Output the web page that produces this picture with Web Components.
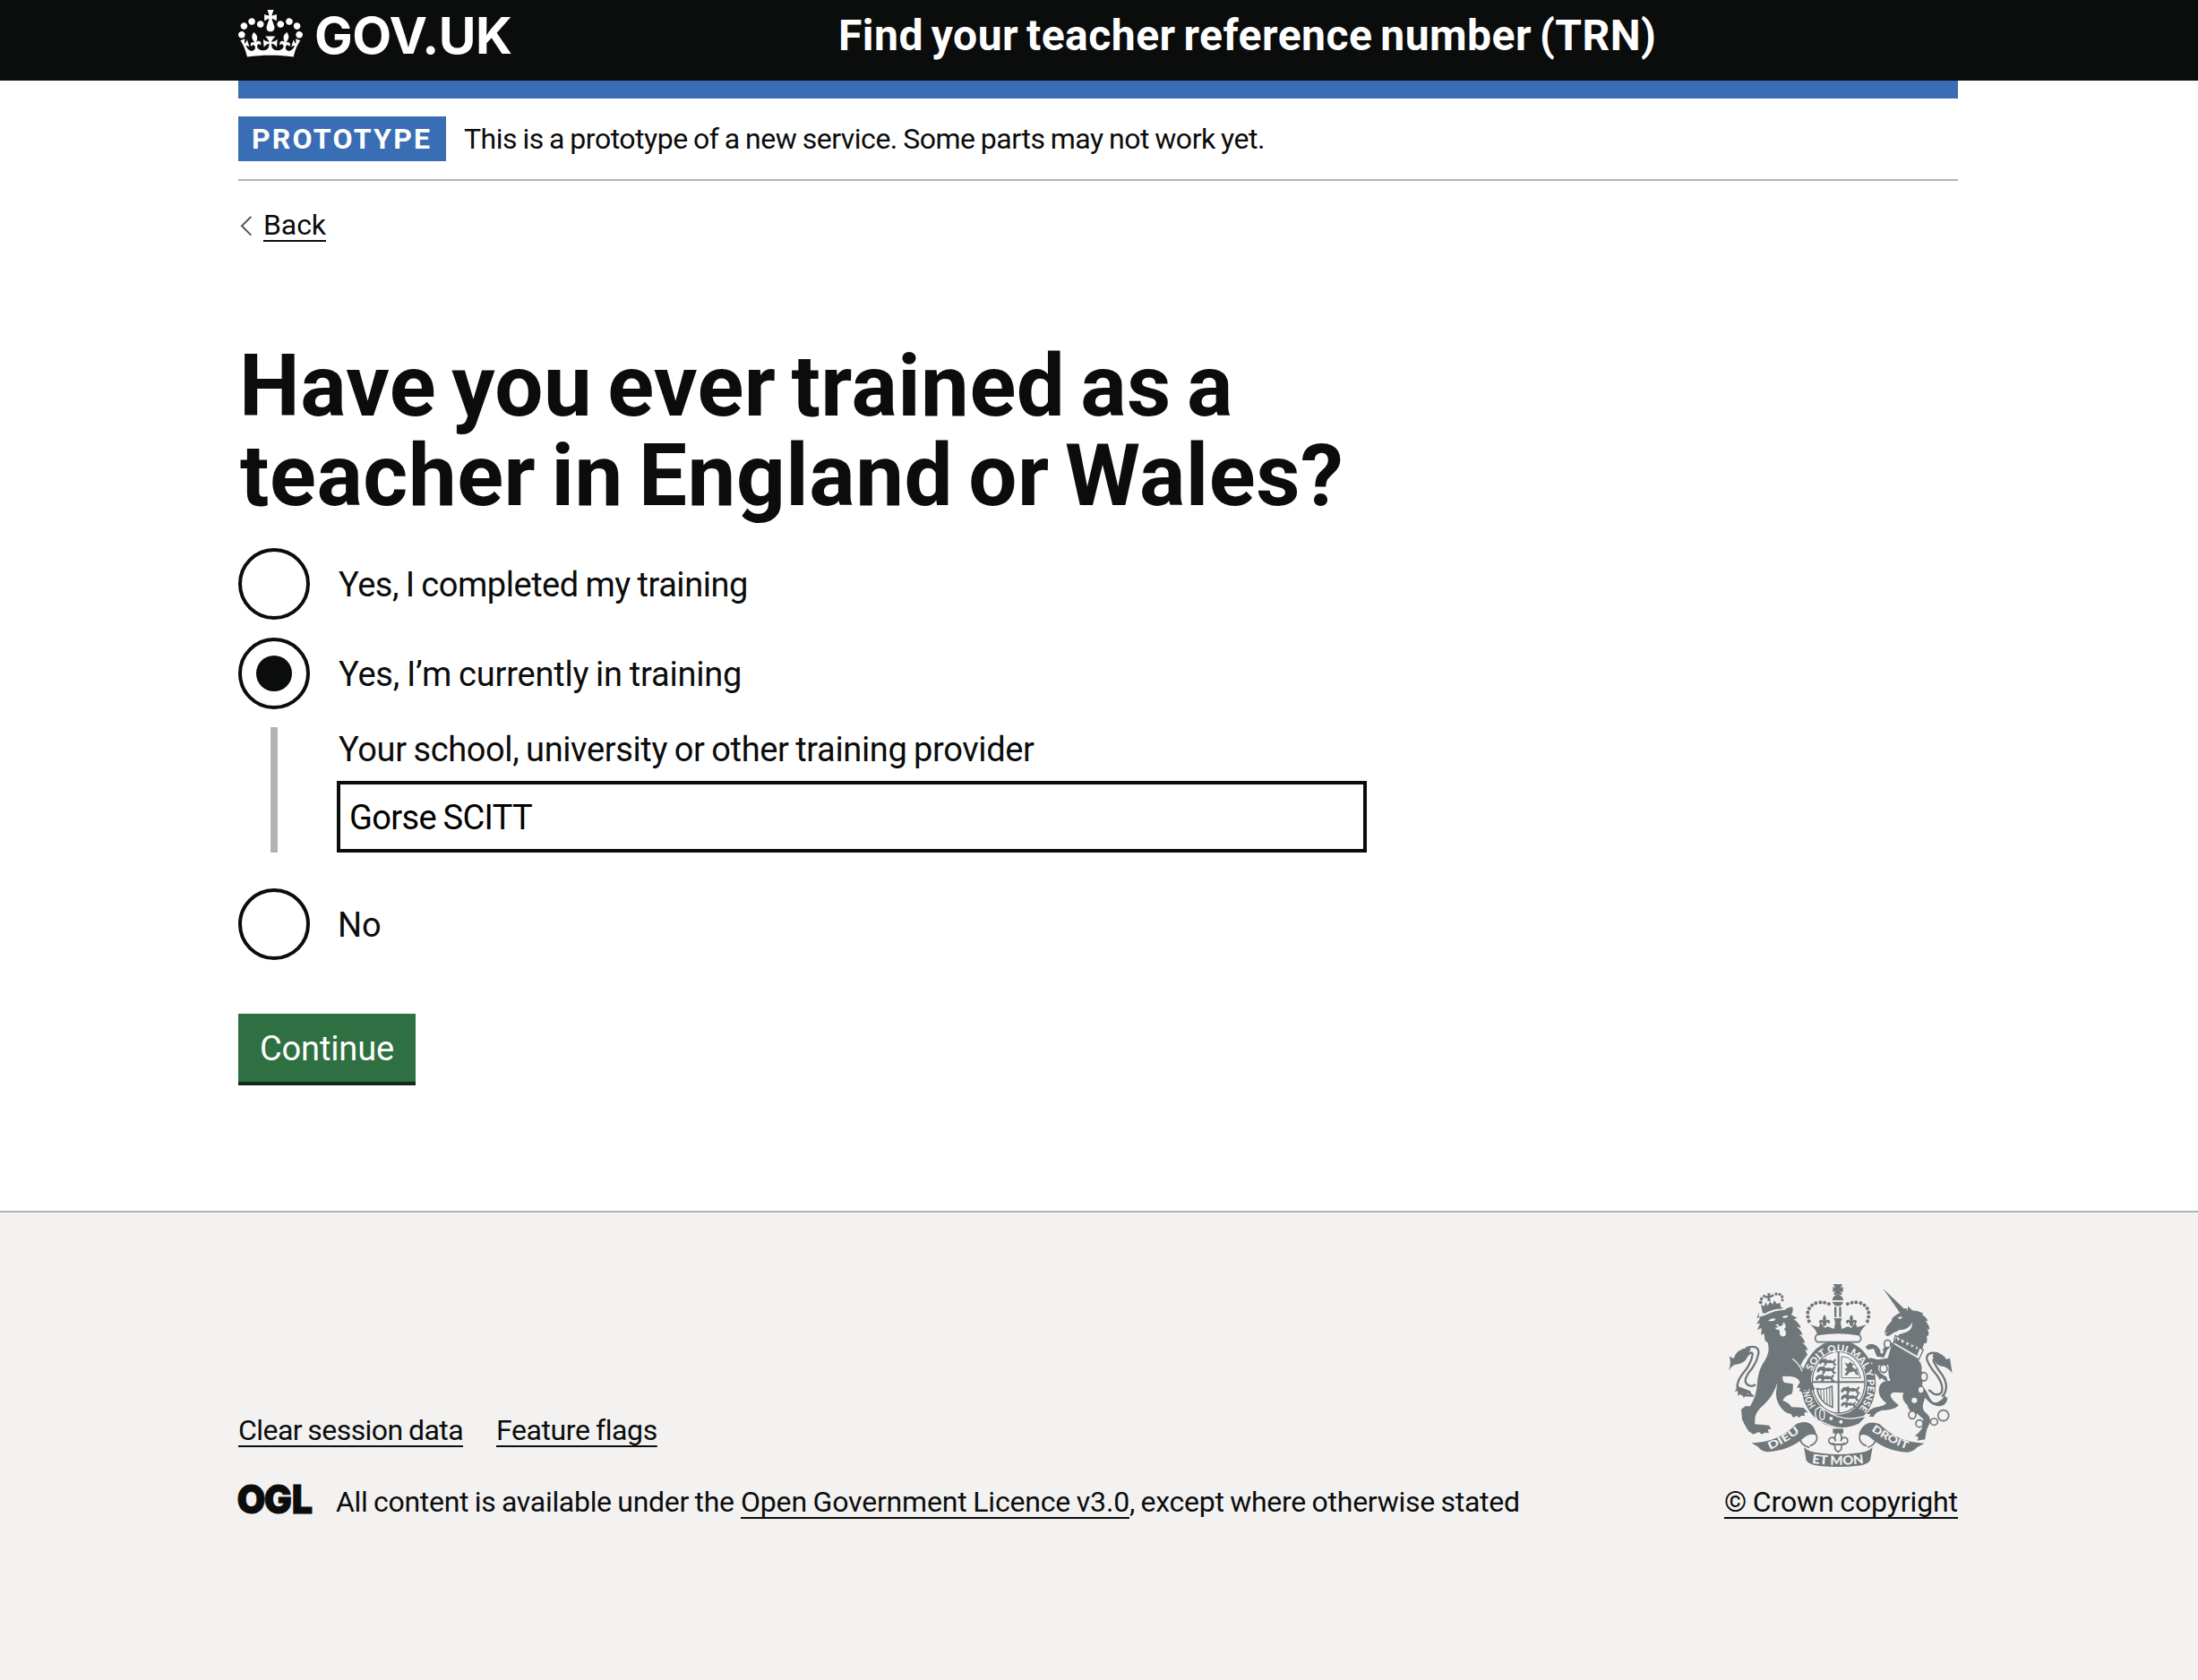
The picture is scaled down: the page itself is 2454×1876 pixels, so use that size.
<!DOCTYPE html>
<html lang="en">
<head>
<meta charset="utf-8">
<title>Find your teacher reference number (TRN)</title>
<style>
html,body{margin:0;padding:0}
body{font-family:Roboto,"Liberation Sans",sans-serif;color:#0b0c0c;background:#fff;font-size:38px;overflow:hidden}
</style>
</head>
<body>
<trn-page></trn-page>
<script>
const define=(name,html,after)=>{
  const t=document.createElement('template');t.innerHTML=html;
  customElements.define(name,class extends HTMLElement{
    constructor(){super();this.attachShadow({mode:'open'}).append(t.content.cloneNode(true));}
    connectedCallback(){if(after)after(this,this.shadowRoot);}
  });
};
const pen=document.createElement('canvas').getContext('2d');
const SPACE={700:-.075,400:-.035};

/* One line of text whose tracking is set so the drawn letters span "ink" pixels. */
define('gov-text',`<style>:host{display:inline-block;white-space:pre}</style><span><slot></slot></span>`,(el,root)=>{
  const s=getComputedStyle(el),txt=el.textContent,ink=+el.getAttribute('ink');
  pen.font=`${s.fontWeight} ${s.fontSize} ${s.fontFamily}`;
  const m=pen.measureText(txt);
  const ws=(SPACE[s.fontWeight]||0)*parseFloat(s.fontSize);
  const ls=(ink-m.actualBoundingBoxRight-m.actualBoundingBoxLeft-ws*(txt.split(' ').length-1))/(txt.length-1);
  const span=root.querySelector('span');
  span.style.letterSpacing=ls+'px';
  span.style.wordSpacing=ws+'px';
  span.style.marginRight=-ls+'px';
  if(!el.hasAttribute('keep'))span.style.marginLeft=m.actualBoundingBoxLeft+'px';
});

define('gov-link',`<style>:host{display:inline-block}a{color:#0b0c0c;text-decoration:underline;text-decoration-thickness:2px;text-underline-offset:6px;text-decoration-skip-ink:none;white-space:pre}</style><a><slot></slot></a>`,(el,root)=>{
  const s=getComputedStyle(el),txt=el.textContent,a=root.querySelector('a');
  pen.font=`${s.fontWeight} ${s.fontSize} ${s.fontFamily}`;
  const ws=SPACE[400]*parseFloat(s.fontSize);
  a.style.wordSpacing=ws+'px';
  a.style.letterSpacing=(+el.getAttribute('width')-pen.measureText(txt).width-ws*(txt.split(' ').length-1))/txt.length+'px';
});

define('gov-crown',`<style>:host{display:block;width:72px;height:53px}svg{display:block}</style>
<svg width="72" height="53" viewBox="0 0 132 97" preserveAspectRatio="none"><path fill="#fff" fill-rule="evenodd" d="M25 30.2c3.5 1.5 7.7-.2 9.1-3.7 1.5-3.6-.2-7.8-3.9-9.2-3.6-1.4-7.6.3-9.1 3.9-1.4 3.5.3 7.5 3.9 9zM9 39.5c3.6 1.5 7.8-.2 9.2-3.7 1.5-3.6-.2-7.8-3.9-9.1-3.6-1.5-7.6.2-9.1 3.8-1.4 3.5.3 7.5 3.8 9zM4.4 57.2c3.5 1.5 7.7-.2 9.1-3.8 1.5-3.6-.2-7.7-3.9-9.1-3.5-1.5-7.6.3-9.1 3.8-1.4 3.5.3 7.6 3.9 9.1zm38.3-21.4c3.5 1.5 7.7-.2 9.1-3.8 1.5-3.6-.2-7.7-3.9-9.1-3.6-1.5-7.6.3-9.1 3.8-1.3 3.6.4 7.7 3.9 9.1zm64.4-5.6c-3.6 1.5-7.8-.2-9.1-3.7-1.5-3.6.2-7.8 3.8-9.2 3.6-1.4 7.7.3 9.2 3.9 1.3 3.5-.4 7.5-3.9 9zm15.9 9.3c-3.6 1.5-7.7-.2-9.1-3.7-1.5-3.6.2-7.8 3.7-9.1 3.6-1.5 7.7.2 9.2 3.8 1.5 3.5-.3 7.5-3.8 9zm4.7 17.7c-3.6 1.5-7.8-.2-9.2-3.8-1.5-3.6.2-7.7 3.9-9.1 3.6-1.5 7.7.3 9.2 3.8 1.3 3.5-.4 7.6-3.9 9.1zM89.3 35.8c-3.6 1.5-7.8-.2-9.2-3.8-1.4-3.6.2-7.7 3.9-9.1 3.6-1.5 7.7.3 9.2 3.8 1.4 3.6-.3 7.7-3.9 9.1zM69.7 17.7l8.9 4.7V9.3l-8.9 2.8c-.2-.3-.5-.6-.9-.9L72.4 0H59.6l3.5 11.2c-.3.3-.6.5-.9.9l-8.8-2.8v13.1l8.8-4.7c.3.3.6.7.9.9l-5 15.4v.1c-.2.8-.4 1.6-.4 2.4 0 4.1 3.1 7.5 7 8.1h.2c.3 0 .7.1 1 .1.4 0 .7 0 1-.1h.2c4-.6 7.1-4.1 7.1-8.1 0-.8-.1-1.7-.4-2.4V34l-5.1-15.4c.4-.2.7-.6 1-.9zM66 92.8c16.9 0 32.8 1.1 47.1 3.2 4-16.9 8.9-26.7 14-33.5l-9.6-3.4c1 4.9 1.1 7.2 0 10.2-1.5-1.4-3-4.3-4.2-8.7L108.6 76c2.8-2 5-3.2 7.5-3.3-4.4 9.4-10 11.9-13.6 11.2-4.3-.8-6.3-4.6-5.6-7.9 1-4.7 5.7-5.9 8-.5 4.3-8.7-3-11.4-7.6-8.8 7.1-7.2 7.9-13.5 2.1-21.1-8 6.1-8.1 12.3-4.5 20.8-4.7-5.4-12.1-2.5-9.5 6.2 3.4-5.2 7.9-2 7.2 3.1-.6 4.3-6.4 7.8-13.5 7.2-10.3-.9-10.9-8-11.2-13.8 2.5-.5 7.1 1.8 11 7.3L80.2 60c-4.1 4.4-8 5.3-12.3 5.4 1.4-4.4 8-11.6 8-11.6H55.5s6.4 7.2 7.9 11.6c-4.2-.1-8-1-12.3-5.4l1.4 16.4c3.9-5.5 8.5-7.7 10.9-7.3-.3 5.8-.9 12.8-11.1 13.8-7.2.6-12.9-2.9-13.5-7.2-.7-5 3.8-8.3 7.1-3.1 2.7-8.7-4.6-11.6-9.4-6.2 3.7-8.5 3.6-14.7-4.6-20.8-5.8 7.6-5 13.9 2.2 21.1-4.7-2.6-11.9.1-7.7 8.8 2.3-5.5 7.1-4.2 8.1.5.7 3.3-1.3 7.1-5.7 7.9-3.5.7-9-1.8-13.5-11.2 2.5.1 4.7 1.3 7.5 3.3l-4.7-15.4c-1.2 4.4-2.7 7.2-4.3 8.7-1.1-3-.9-5.3 0-10.2l-9.5 3.4c5 6.9 9.9 16.7 14 33.5 14.8-2.1 30.8-3.2 47.7-3.2z"/></svg>`);

define('gov-header',`<style>
:host{display:block;background:#0b0c0c;height:90px;color:#fff}
.in{display:flex;align-items:center;width:1920px;height:79px;margin:0 0 0 266px}
gov-crown{margin:-4px 15px 0 0}
.logo{font:700 57px/79px Inter,"Liberation Sans",sans-serif}
.name{font-size:48px;font-weight:700;line-height:79px;margin-left:367px}
</style><div class="in"><gov-crown></gov-crown><gov-text class="logo" ink="218">GOV.UK</gov-text><gov-text class="name" ink="908">Find your teacher reference number (TRN)</gov-text></div>`);

define('gov-phase-banner',`<style>
:host{display:block;border-top:20px solid #396eb4;border-bottom:2px solid #b1b4b6;padding:20px 0;font-size:32px;line-height:50px}
div{display:flex;height:50px}
.tag{box-sizing:border-box;width:232px;padding-left:17px;background:#396eb4;color:#fff;font-weight:700;margin-right:20px}
</style><div><gov-text class="tag" ink="197">PROTOTYPE</gov-text><slot></slot></div>`);
define('gov-back-link',`<style>
:host{display:flex;height:50px;line-height:50px;font-size:32px;margin-top:24px}
svg{display:block;margin:15px 12px 0 2px}
</style><svg width="14" height="23" viewBox="0 0 14 23"><path d="M12.3 1L2 11.3 12.3 21.6" fill="none" stroke="#505a5f" stroke-width="2"/></svg><gov-link width="70">Back</gov-link>`);

define('gov-radio',`<style>
:host{display:flex;height:80px}
i{box-sizing:border-box;width:80px;height:80px;border:4px solid #0b0c0c;border-radius:50%;display:grid;place-items:center;margin-right:32px}
:host([checked]) i::after{content:"";width:40px;height:40px;border-radius:50%;background:#0b0c0c}
.l{line-height:80px;padding-top:1px}
</style><i></i><div class="l"><slot></slot></div>`);

define('gov-conditional',`<style>
:host{display:block;box-sizing:border-box;height:140px;margin-left:36px;border-left:8px solid #b1b4b6;padding-left:66px}
.l{height:50px;line-height:50px;margin-bottom:10px;padding-left:2px}
.f{box-sizing:border-box;width:1150px;height:80px;border:4px solid #0b0c0c;line-height:72px;padding:1px 0 0 12px;color:#000}
</style><div class="l"><slot name="label"></slot></div><div class="f"><slot></slot></div>`);

define('gov-button',`<style>
:host{display:block;box-sizing:border-box;width:198px;height:76px;background:#2f7042;box-shadow:0 4px 0 #12291f;color:#fff;line-height:76px;padding:1px 0 0 26px}
</style><slot></slot>`);

define('ogl-logo',`<style>:host{display:block;width:82px;height:34px}svg{display:block;overflow:visible}text{font:900 44px Inter,sans-serif;fill:#0b0c0c;stroke:#0b0c0c;stroke-width:.8}</style>
<svg width="82" height="34" viewBox="0 0 82 34"><g transform="scale(.94 1)"><text x="-1.5 30.5 63.5" y="32.7">OGL</text></g></svg>`);

define('royal-arms',`<style>:host{display:block;width:260px;height:230px}svg{display:block}text{font-family:Lato,"Liberation Sans",sans-serif;font-weight:900;fill:#f3f2f1}</style>
<svg width="260" height="230" viewBox="48 0 780 690" fill="#6f777b">
<defs>
<path id="ringL" d="M352 449A98 116 0 0 1 330 384"/>
<path id="ring" d="M338 334A98 112 0 1 1 490 466"/>
<path id="ribL" d="M198 597Q255 572 302 534"/>
<path id="ribM" d="M338 641Q427 654 516 641"/>
<path id="ribR" d="M537 532Q590 570 660 596"/>
<g id="lions"><path d="M0 12q8-12 18-8l6-4 4 8q12-4 22 2l8-8 4 3-6 10q2 8 8 8l-2 4h-8l-6-10q-8 4-18 0l-6 10h-8l4-8-8-4-8 8-5-3z"/></g>
<g id="fleur"><path d="M0-20q10 12 3 22 6-7 13-3 6 8-4 12 1-7-5-5l-3 12h-8l-3-12q-6-2-5 5-10-4-4-12 7-4 13 3-7-10 3-22z"/></g>
</defs>
<!-- lion crown -->
<g><circle cx="167" cy="103" r="6"/><circle cx="170" cy="91" r="5.500"/><circle cx="179" cy="82" r="5"/><circle cx="188" cy="85" r="4"/><circle cx="207" cy="80" r="4.500"/><circle cx="219" cy="75" r="5"/><circle cx="231" cy="76" r="5"/><circle cx="239" cy="84" r="5"/><circle cx="240" cy="95" r="4.500"/>
<path d="M190 72l10 0-2 8 6-1 0 9-6-2 2 13h-10l1-12-7 2v-8l7 1zM168 110l12 6 3-14 8 12 8-14 8 10 6-14 8 12 11-4 4 20q-32 0-62 16z"/><path d="M176 134q32-16 62-15l4 5q-36 0-62 17z"/></g>
<!-- garter and shield -->
<ellipse cx="428" cy="376" rx="125" ry="146"/>
<ellipse cx="428" cy="371" rx="93" ry="108" fill="#f3f2f1"/>
<ellipse cx="428" cy="371" rx="88" ry="103" fill="none" stroke="#6f777b" stroke-width="4"/>
<path d="M425 267h6v208h-6zM340 367h176v6H340z"/>
<use href="#lions" transform="translate(364 290) scale(.9)"/><use href="#lions" transform="translate(356 315)"/><use href="#lions" transform="translate(352 342)"/>
<use href="#lions" transform="translate(437 383)"/><use href="#lions" transform="translate(437 408) scale(.95)"/><use href="#lions" transform="translate(437 434) scale(.8)"/>
<path fill="none" stroke="#6f777b" stroke-width="3" d="M438 284q46 0 64 72h-64z"/>
<path d="M448 304l12 6 6-8 14 10-8 4 10 10 10-2-2 10 6 14-10-4-6-10-16 4-8 10-8-2 8-12-8-8 10-4z"/>
<path fill="none" stroke="#6f777b" stroke-width="5" d="M356 392q24 6 50-8l2 70q-44-14-52-62z"/><path fill="none" stroke="#6f777b" stroke-width="3" d="M368 396l2 28M378 395l2 40M388 394l2 50M398 391l1 58"/>
<text font-size="32"><textPath href="#ringL" textLength="62" lengthAdjust="spacingAndGlyphs">HONI</textPath></text>
<text font-size="32"><textPath href="#ring" textLength="370" lengthAdjust="spacingAndGlyphs">SOIT QUI MAL Y PENSE</textPath></text>
<path d="M352 462q14-14 26-2 60 44 122 28l24-4-26 26q-54 24-96 6l-44-18q-12-14-6-36z" stroke="#f3f2f1" stroke-width="4"/>
<circle cx="403" cy="492" r="6" fill="#f3f2f1"/><circle cx="436" cy="503" r="6" fill="#f3f2f1"/>
<ellipse cx="373" cy="479" rx="8" ry="17" fill="none" stroke="#f3f2f1" stroke-width="4"/>
<!-- lion -->
<path d="M160 152l22-6q34-18 66-18 16-12 26-9 4 12-4 26l20 10-12 5q16 10 24 28l-14-3q14 10 20 27l-12-2q16 12 20 29l-10-2q14 10 20 26l-10-1 8 16q-16 18-23 36 26 28 34 52l7 14 8 14-14 4-4-10-8 12-10-4-6 9-12-6 5-10-12 0q2-12 10-18-6-18-32-20l-26-1q-2 16 6 22l28 4q2 22-4 34-24 4-30 22 20 6 30 22 20 0 40 2l14 16-12 0 2 12-12-2-6 8-9-7-12 6-7-12q-26-4-42-34-10-18-8-40l4-30q-14 44-44 72-26 22-30 40l-2 26 28 2 20 2 8 12-12 2 4 12-14-2-10 6-10-8-18 8-16-10-12-20-10-20-3-34 14-10 16 0q22-36 24-80 2-34 18-62 18-26 20-48l-2-22-10-8-4-24-9 6 1-24-14 6 9-22-12 2 13-20-12-1 9-18z"/>
<path fill="#f3f2f1" d="M192 164q14-10 26-6-6 12-26 6zM238 152q12-8 22-4-6 12-22 4zM216 178l30-8 6 14-6 8q8 10 6 18-4 10-16 6-8-6-5-20l-10-2-6-6 12-2z"/>
<path d="M222 172l22-6-4 14-10 4z"/>
<path fill="none" stroke="#f3f2f1" stroke-width="4" d="M274 292q24 18 32 42"/>
<path d="M60 332q10-28 2-48 12 4 14 8 10-34 52-38l6 5-10 26q-12 26-42 26-14 6-22 21z"/>
<path fill="none" stroke="#6f777b" stroke-width="7" d="M118 256q44-14 42 18-6 34-34 66-16 24-6 36 14 14 30 2M122 280q18-16 18-2-4 30-30 60-26 32-20 56 6 16 22 20l32 2"/>
<path d="M92 384l-12 18 12-4-2 18 16-10 4 18 14-16 18 12-10-20z"/>
<!-- unicorn -->
<path d="M577 56l70 68 9-1 2 12-20 10z"/>
<path d="M590 183l16-18 2-10 20-15 30-8 3-16 14 14 18 2 20 8-6 4q16 8 20 22l-8-2q12 14 15 30l-8-3q6 12 3 24l-6 0q4 16-2 26l-6-2-8 24-20-16-60-28q4-14 4-20-18 4-24 10l-14 8-10-6 10-8-12 3z"/>
<path fill="#f3f2f1" d="M626 156q8-8 16-4-4 10-16 4zM630 196q36-2 44-26 4 28-30 36l-24 8-6-6z"/>
<path d="M608 238q30 28 84 54 18 18 14 38l6 22-4 28q16 20 26 44 14 28 42 2l8-12 6 10 4-4-4 16q-10 18-32 14-22-4-40-28l-6 18q-6 22 10 34 16 14 12 32l-10 22-4 18-2 16-26 4 4-12-12-4 12-10 12-16 4-30-20-18q-28-2-34-30-22-18-12-40l-34-2q-26 10 18 44-20 18-56 16-26 8-28 22l-16 0 6-8-14-2 10-12 14-8q40-8 42-16-34-24-22-58 8-18 36-16-10-20-6-46L590 300z"/>
<path d="M606 288l-46 7-26-6-7 9 14 8-2 20 10 14 9 8 8 14 6-6 10 8 11 4-4-15-19-12-9-13 1-14 40-2z"/>
<path d="M612 238l-22 26-10 24-24-4-10-26-20 4-8-10 10-8 14-2 14 6 16 20 14-22z"/>
<path d="M618 214l94 48-15 32-86-50z" fill="#f3f2f1" stroke="#6f777b" stroke-width="4"/>
<path d="M614 238l8-20 5 14 10-10 3 18 14-12 2 20 14-12 2 18 14-10 2 16 14-8-11 30z"/>
<g fill="#f3f2f1" stroke="#6f777b" stroke-width="5"><ellipse cx="592" cy="242" rx="11" ry="13"/><ellipse cx="579" cy="325" rx="12" ry="13"/><ellipse cx="714" cy="352" rx="11" ry="14"/><ellipse cx="675" cy="480" rx="12" ry="13"/><ellipse cx="699" cy="509" rx="12" ry="12"/><ellipse cx="748" cy="503" rx="12" ry="11"/><circle cx="779" cy="482" r="18"/></g>
<g fill="#f3f2f1"><ellipse cx="573" cy="268" rx="5" ry="7"/><ellipse cx="704" cy="396" rx="8" ry="10"/><ellipse cx="682" cy="431" rx="9" ry="9"/></g>
<path d="M809 340q-4-26-8-50l-12 4q-10-20-38-24l-8 12q6 34 38 36 16 6 28 22z"/>
<path fill="none" stroke="#6f777b" stroke-width="7" d="M762 274q-42-8-38 20 8 24 34 54 22 32 16 54-8 14-26 8l-18-14M754 294q-12-4-6 10 10 20 26 40 18 28 14 48 -2 18-14 26"/>
<!-- imperial crown -->
<path d="M410 42h31l-6 12 8-3v18l-8-4 5 12h-29l6-12-8 4V51l8 3z"/>
<path d="M407 96a18 18 0 0 1 37 0zM407 101h37q-4 14-18 14t-19-14z"/><path d="M414 118h7v34h-7zM430 118h7v34h-7z"/>
<g stroke="#6f777b" stroke-width="12" stroke-linecap="round" stroke-dasharray=".1 14.5" fill="none"><path d="M329 166q-16-46 26-62 30-4 48 8"/><path d="M525 166q16-46-26-62-30-4-48 8"/></g>
<path d="M333 178l28 8 8-16 12 18 12-4 20 8 4-20-4-16h26l-4 16 4 20 20-8 12 4 12-18 8 16 30-8q-22 20-22 38-72-10-142 0 0-20-24-38z"/>
<use href="#fleur" x="381" y="164"/><use href="#fleur" x="471" y="164"/>
<path d="M354 212q-10 16 4 24l136 0q16-8 4-24-72-14-144 0z" fill="#f3f2f1" stroke="#6f777b" stroke-width="5"/>
<path d="M409 526h35v16h-35z"/><path fill="#f3f2f1" stroke="#6f777b" stroke-width="5" d="M427 536q18 16 8 32 8-20 22-8 6 12-8 18-4-6-10 2l-2 16-10 8-10-8-2-16q-6-8-10-2-14-6-8-18 14-12 22 8-10-16 8-32z"/><path d="M408 576h38v6h-38z"/>
<!-- motto ribbon -->
<path d="M137 574q90-2 150-64 34-14 54 6 12 18 12 32-22-8-40 8-50 44-125 48-22-4-28-16z"/>
<path d="M716 575q-90-2-150-64-34-14-54 6-16 18-16 32 22-8 40 8 50 44 124 48 24-4 30-16z"/>
<path fill="none" stroke="#6f777b" stroke-width="5" d="M318 540q36-10 38 18-4 20-24 26M300 553q-4 26 30 36M536 540q-36-10-38 18 4 20 24 26M552 553q4 26-26 36"/>
<path d="M312 588q18 18 60 20 56 8 112 0 42-2 58-20l-8 44q-8 14-40 18-68 8-134 0-32-4-40-18z"/>
<text font-size="35"><textPath href="#ribL" textLength="118" lengthAdjust="spacingAndGlyphs">DIEU</textPath></text>
<text font-size="42"><textPath href="#ribM" textLength="176" lengthAdjust="spacingAndGlyphs">ET MON</textPath></text>
<text font-size="35"><textPath href="#ribR" textLength="136" lengthAdjust="spacingAndGlyphs">DROIT</textPath></text>
</svg>`);

define('gov-footer',`<style>
:host{display:block;background:#f3f2f1;border-top:2px solid #b1b4b6;height:522px;font-size:32px;line-height:50px}
.in{width:1920px;height:348px;margin:0 0 0 266px;display:flex;justify-content:space-between;align-items:flex-end}
.row{display:flex;height:50px}
.links{gap:37px;margin-bottom:30px}
ogl-logo{margin:5px 27px 0 0}
.first{margin-right:7px}
.right{display:flex;flex-direction:column;align-items:flex-end;gap:2px}
.right gov-link{height:50px}
</style><div class="in"><div><div class="row links"><gov-link width="251">Clear session data</gov-link><gov-link width="179">Feature flags</gov-link></div>
<div class="row"><ogl-logo></ogl-logo><gov-text class="first" ink="444">All content is available under the</gov-text><gov-link width="434">Open Government Licence v3.0</gov-link><gov-text ink="434" keep>, except where otherwise stated</gov-text></div></div>
<div class="right"><royal-arms></royal-arms><gov-link width="261">© Crown copyright</gov-link></div></div>`);

define('trn-page',`<style>
:host{display:block;width:2454px;height:1876px}
main{width:1920px;height:1262px;margin:0 0 0 266px}
h1{font-size:96px;line-height:100px;font-weight:700;margin:105px 0 31px}
h1 gov-text{display:block;height:100px}
.a{margin-left:7px}.b{margin-left:2px}.no{margin-left:2px}
.radios{display:flex;flex-direction:column;gap:20px}
.radios gov-radio:last-child{margin-top:20px}
gov-button{margin-top:60px}
</style><gov-header></gov-header><main><gov-phase-banner><gov-text ink="892">This is a prototype of a new service. Some parts may not work yet.</gov-text></gov-phase-banner><gov-back-link></gov-back-link>
<h1><gov-text class="a" ink="1101">Have you ever trained as a</gov-text><gov-text class="b" ink="1229">teacher in England or Wales?</gov-text></h1>
<div class="radios"><gov-radio><gov-text ink="455">Yes, I completed my training</gov-text></gov-radio>
<gov-radio checked><gov-text ink="448">Yes, I’m currently in training</gov-text></gov-radio>
<gov-conditional><gov-text slot="label" ink="777">Your school, university or other training provider</gov-text><gov-text ink="202">Gorse SCITT</gov-text></gov-conditional>
<gov-radio><gov-text class="no" ink="44">No</gov-text></gov-radio></div>
<gov-button><gov-text ink="147">Continue</gov-text></gov-button></main><gov-footer></gov-footer>`);
</script>
</body>
</html>
